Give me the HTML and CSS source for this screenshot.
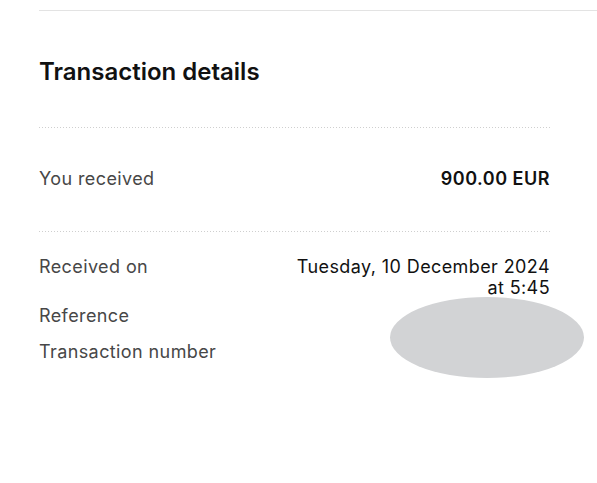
FILE: index.html
```html
<!DOCTYPE html>
<html lang="en">
<head>
<meta charset="utf-8">
<title>Transaction details</title>
<link rel="stylesheet" href="styles.css">
</head>
<body>
<div class="page">
  <div class="topline"></div>
  <section class="details">
    <h2 class="title">Transaction details</h2>
    <div class="divider"></div>
    <div class="row row-amount">
      <span class="label">You received</span>
      <span class="value strong">900.00 EUR</span>
    </div>
    <div class="divider"></div>
    <div class="info">
      <div class="row row-date">
        <span class="label">Received on</span>
        <span class="value">Tuesday, 10 December 2024<br>at 5:45</span>
      </div>
      <div class="row row-ref">
        <span class="label">Reference</span>
        <span class="value"></span>
      </div>
      <div class="row row-num">
        <span class="label">Transaction number</span>
        <span class="value"></span>
      </div>
      <div class="redact"></div>
    </div>
  </section>
</div>
</body>
</html>
```
FILE: styles.css
```css
html, body {
  margin: 0;
  padding: 0;
  background: #ffffff;
}
body {
  font-family: Inter, "Noto Sans", "Liberation Sans", sans-serif;
  color: #111111;
  min-height: 483px;
}
.page {
  padding-left: 39px;
  padding-top: 10px;
}
.topline {
  height: 1px;
  background: #e3e3e3;
}
.details {
  width: 511px;
}
.title {
  margin: 0;
  padding-top: 47px;
  font-size: 24px;
  line-height: 28px;
  font-weight: 600;
  letter-spacing: 0;
  color: #111111;
}
.divider {
  height: 1px;
  background-image: linear-gradient(to right, #cfcfcf 1px, transparent 1px);
  background-size: 3px 1px;
  background-repeat: repeat-x;
}
.title + .divider {
  margin-top: 41px;
}
.row {
  display: flex;
  justify-content: space-between;
  align-items: flex-start;
  font-size: 18px;
  line-height: 21px;
  letter-spacing: 0.4px;
}
.label {
  color: #474747;
}
.value {
  text-align: right;
  color: #111111;
}
.strong {
  font-weight: 600;
  letter-spacing: 0.5px;
}
.row-amount {
  padding: 40px 0 42px;
}
.info {
  position: relative;
  padding-top: 24px;
  padding-bottom: 40px;
}
.row-ref {
  margin-top: 7px;
}
.row-num {
  margin-top: 15px;
}
.redact {
  position: absolute;
  left: 351px;
  top: 65px;
  width: 194px;
  height: 81px;
  border-radius: 50%;
  background: #d2d3d5;
}
```
